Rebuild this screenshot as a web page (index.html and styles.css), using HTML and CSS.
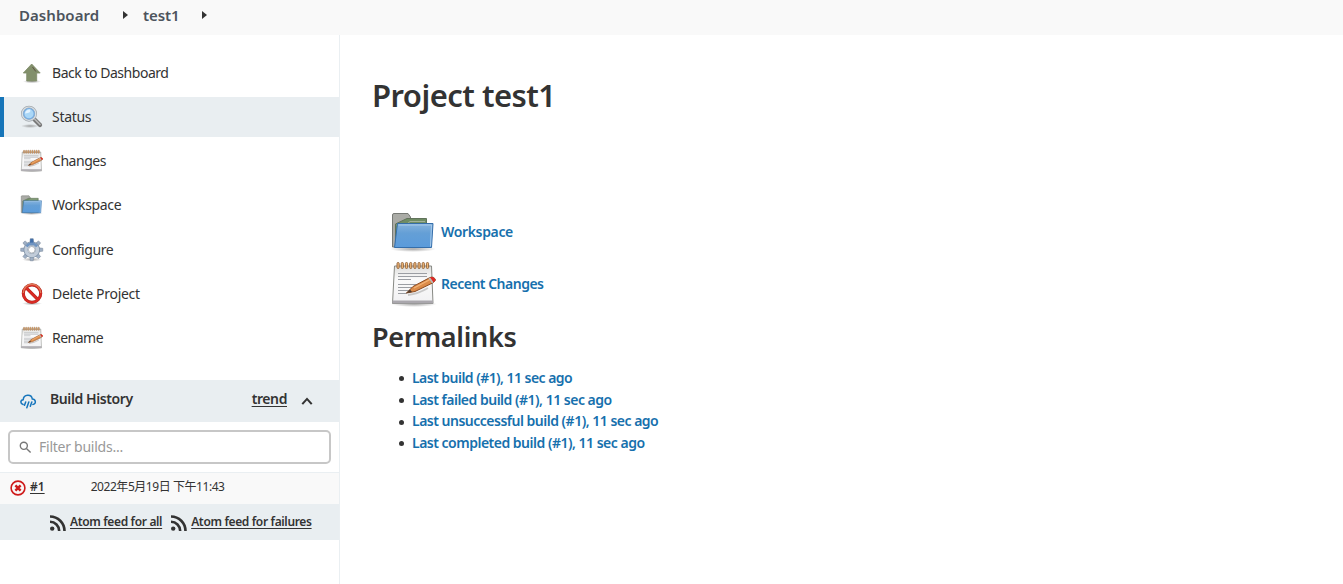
FILE: index.html
```html
<!DOCTYPE html>
<html lang="en">
<head>
<meta charset="utf-8">
<title>test1</title>
<link rel="stylesheet" href="styles.css">
</head>
<body>
<svg class="defs" width="0" height="0" aria-hidden="true">
  <defs>
    <linearGradient id="blue" x1="0" y1="0" x2="0" y2="1"><stop offset="0" stop-color="#86b3dd"/><stop offset=".4" stop-color="#649fd6"/><stop offset="1" stop-color="#5b9bdb"/></linearGradient>
    <linearGradient id="paper" x1="0" y1="0" x2="0" y2="1"><stop offset="0" stop-color="#dededc"/><stop offset=".35" stop-color="#fafafa"/><stop offset="1" stop-color="#f1f1f3"/></linearGradient>
    <radialGradient id="shade"><stop offset="0" stop-color="#777" stop-opacity=".65"/><stop offset="1" stop-color="#777" stop-opacity="0"/></radialGradient>
    <symbol id="notepad" viewBox="0 0 48 48">
      <ellipse cx="24" cy="44" rx="23" ry="3" fill="url(#shade)"/>
      <path d="M4.500 6H41.500L43 43.500H2.500Z" fill="url(#paper)" stroke="#888a85"/>
      <path d="M2.500 40.500H43V43.500H2.500Z" fill="#aaa7ad"/>
      <path d="M8 13.500H37M8 16.500H37M8 19.500H21M8 24.500H26M8 27.500H24M8 30.500H21M8 33.500H17" stroke="#9b9ea3"/>
      <g fill="#f0b878" stroke="#8d5f38" stroke-width=".9"><rect x="7" y="2.500" width="2.200" height="6" rx="1"/><rect x="11.200" y="2.500" width="2.200" height="6" rx="1"/><rect x="15.400" y="2.500" width="2.200" height="6" rx="1"/><rect x="19.600" y="2.500" width="2.200" height="6" rx="1"/><rect x="23.800" y="2.500" width="2.200" height="6" rx="1"/><rect x="28" y="2.500" width="2.200" height="6" rx="1"/><rect x="32.200" y="2.500" width="2.200" height="6" rx="1"/><rect x="36.400" y="2.500" width="2.200" height="6" rx="1"/></g>
      <path d="M18 35Q28 34 38 28" stroke="#aaa" stroke-width="2" fill="none" opacity=".6"/>
      <path d="M16.500 33L23 26.500 40 17.500Q44 16 45.500 20L43.500 22.500 25 31.500Z" fill="#dc8c4a" stroke="#8b4a20"/>
      <path d="M24 28L41 19" stroke="#f3b478" stroke-width="1.400"/>
      <path d="M16.500 33L20 29.500 22 32Z" fill="#4b3b30"/>
      <path d="M40 17.500Q44 16 45.500 20L43.500 22.500Z" fill="#df2727"/><path d="M38.500 18.300L40 17.500 43.500 22.500 42 23.300Z" fill="#bbb"/>
    </symbol>
    <symbol id="folder" viewBox="0 0 48 48">
      <ellipse cx="23" cy="41" rx="23" ry="3" fill="url(#shade)"/>
      <path d="M2.500 39V7Q2.500 5.500 4 5.500H18L20.500 9V39Z" fill="#aaaba6" stroke="#777a75"/>
      <path d="M5.500 39V16L17 10.500H36.500V39Z" fill="#6f8c64" stroke="#60725a"/>
      <path d="M6.500 17H16L20 13.500H35" stroke="#a2b298" fill="none"/>
      <path d="M7.500 15.500H43L41.500 39.500H4.500Z" fill="url(#blue)" stroke="#356eaa"/>
      <path d="M8.500 17H41.500L40.500 38.500" stroke="#a8caea" fill="none"/>
    </symbol>
    <symbol id="feed" viewBox="0 0 16 16">
      <g fill="none" stroke="#333"><path d="M0 1.500A14.500 14.500 0 0 1 14.500 16" stroke-width="2.600"/><path d="M0 6.800A9.200 9.200 0 0 1 9.200 16" stroke-width="2.600"/></g><circle cx="2.200" cy="13.600" r="2.200" fill="#333"/>
    </symbol>
  </defs>
</svg>

<header class="crumbs">
  <a class="crumb-home">Dashboard</a><i class="caret caret-first"></i>
  <a class="crumb-job">test1</a><i class="caret"></i>
</header>

<div class="page">
  <aside class="side">
    <nav class="tasks">
      <a class="task"><svg class="icon" viewBox="0 0 24 24"><ellipse cx="12" cy="20.500" rx="9" ry="1.800" fill="url(#shade)"/><path d="M11.700 3L20.200 12H16.700V20H6.700V12H3.300Z" fill="#82906b" stroke="#7d8a68" stroke-width=".8"/><path d="M12.500 6L15.800 10.500" stroke="#5a4b40" stroke-width=".9"/></svg><span class="t-back">Back to Dashboard</span></a>
      <a class="task active"><svg class="icon" viewBox="0 0 24 24"><ellipse cx="10" cy="21" rx="9" ry="2" fill="url(#shade)"/><path d="M14.500 14.500L20 20" stroke="#777" stroke-width="4.200" stroke-linecap="round"/><path d="M14.800 14.300L20 19.500" stroke="#b9b9b9" stroke-width="1.600" stroke-linecap="round"/><circle cx="9" cy="8.700" r="6.700" fill="#aad7f7" stroke="#a3a9ae" stroke-width="2.600"/><circle cx="9" cy="8.700" r="6.700" fill="none" stroke="#d9dfe4" stroke-width="1.200"/><circle cx="9" cy="8.700" r="5.200" fill="none" stroke="#77ace0" stroke-width="1.200"/><path d="M5 8.500A4.500 4.500 0 0 1 10 4.500Q12 8 5 8.500Z" fill="#e4f3ff"/></svg><span class="t-status">Status</span></a>
      <a class="task"><svg class="icon" viewBox="0 0 48 48"><use href="#notepad"/></svg><span class="t-changes">Changes</span></a>
      <a class="task"><svg class="icon" viewBox="0 0 48 48"><use href="#folder"/></svg><span class="t-workspace">Workspace</span></a>
      <a class="task"><svg class="icon" viewBox="0 0 24 24"><ellipse cx="12" cy="21.500" rx="10" ry="2" fill="url(#shade)"/><g fill="#9eafc5" stroke="#768596" stroke-width=".5"><path id="cog" d="M9.800 5L10.300.7H13.200L13.700 5ZM9.800 18L10.300 22.800H13.200L13.700 18Z"/><use href="#cog" transform="rotate(45 11.750 11.750)"/><use href="#cog" transform="rotate(90 11.750 11.750)"/><use href="#cog" transform="rotate(135 11.750 11.750)"/></g><circle cx="11.750" cy="11.750" r="6" fill="none" stroke="#8093a8" stroke-width="4.500"/><circle cx="11.750" cy="11.750" r="5.800" fill="none" stroke="#c1ccd9" stroke-width="3.300"/><path d="M9.800 7L10.300 .7H13.200L13.700 7Z" fill="#426fa9"/><path d="M6.500 8.500A6.500 6.500 0 0 1 17 8.500" fill="none" stroke="#6f94c1" stroke-width="2.500"/><circle cx="11.750" cy="11.750" r="3.300" fill="#fff" stroke="#8e979f" stroke-width=".7"/></svg><span class="t-configure">Configure</span></a>
      <a class="task"><svg class="icon" viewBox="0 0 24 24"><ellipse cx="12" cy="21.500" rx="10" ry="1.800" fill="url(#shade)"/><circle cx="12" cy="11.600" r="8.500" fill="#fff"/><g fill="none"><circle cx="12" cy="11.600" r="8.700" stroke="#aa271e" stroke-width="3.100"/><path d="M6 5.600L18 17.600" stroke="#aa271e" stroke-width="3.200"/><circle cx="12" cy="11.600" r="8.700" stroke="#d92a24" stroke-width="2.300"/><path d="M6 5.600L18 17.600" stroke="#d92a24" stroke-width="2.400"/><path d="M3.300 11A8.700 8.700 0 0 1 20.700 11" stroke="#df7a58" stroke-width="1.400"/></g></svg><span class="t-delete">Delete Project</span></a>
      <a class="task"><svg class="icon" viewBox="0 0 48 48"><use href="#notepad"/></svg><span class="t-rename">Rename</span></a>
    </nav>

    <section class="history">
      <div class="history-head">
        <svg class="cloud" viewBox="0 0 16 16" fill="none" stroke="#1675bc" stroke-width="1.500" stroke-linecap="round"><path d="M3.100 10.500C.2 9.800 0 6.200 3.200 5.700C3.600.2 11.500-.2 12.300 5C16.200 5.200 16.300 10.300 12.900 10.500"/><path d="M5.700 8L4.500 11.300M8.800 8L6.800 13.800M11.800 8L10.300 12.300"/></svg>
        <b class="history-title">Build History</b><a class="trend">trend</a>
        <svg class="chevron" viewBox="0 0 14 10" fill="none" stroke="#333" stroke-width="2.400"><path d="M1.500 8L7 2L12.500 8"/></svg>
      </div>
      <div class="filter-wrap"><div class="filter">
        <svg class="search" viewBox="0 0 14 14" fill="none" stroke="#777" stroke-width="1.500"><circle cx="5.200" cy="5.200" r="3.800"/><path d="M8 8L12.500 12.500"/></svg>
        <span class="placeholder">Filter builds...</span>
      </div></div>
      <div class="build">
        <svg class="failed" viewBox="0 0 16 16" fill="none" stroke="#ce1b1b"><circle cx="8" cy="8" r="6.900" stroke-width="1.600"/><path d="M5.400 5.400L10.600 10.600M10.600 5.400L5.400 10.600" stroke-width="2.500"/></svg>
        <a class="number">#1</a><span class="date">2022年5月19日 下午11:43</span>
      </div>
      <div class="feeds">
        <svg class="rss" viewBox="0 0 16 16"><use href="#feed"/></svg><a class="feed-all">Atom feed for all</a>
        <svg class="rss rss-next" viewBox="0 0 16 16"><use href="#feed"/></svg><a class="feed-fail">Atom feed for failures</a>
      </div>
    </section>
  </aside>

  <main class="main">
    <h1>Project test1</h1>
    <div class="shortcuts">
      <a class="shortcut"><svg class="big" viewBox="0 0 48 48"><use href="#folder"/></svg><span class="s-workspace">Workspace</span></a>
      <a class="shortcut"><svg class="big" viewBox="0 0 48 48"><use href="#notepad"/></svg><span class="s-changes">Recent Changes</span></a>
    </div>
    <h2>Permalinks</h2>
    <ul class="links">
      <li><a class="first">Last build (#1), 11 sec ago</a></li>
      <li><a>Last failed build (#1), 11 sec ago</a></li>
      <li><a>Last unsuccessful build (#1), 11 sec ago</a></li>
      <li><a>Last completed build (#1), 11 sec ago</a></li>
    </ul>
  </main>
</div>
</body>
</html>
```
FILE: styles.css
```css
* { box-sizing: border-box; }
body { margin: 0; height: 584px; overflow: hidden; background: #fff; color: #333; font: 14px/20px "Noto Sans", "Noto Sans CJK SC", sans-serif; display: flex; flex-direction: column; }
.defs { display: block; position: absolute; }
svg { flex: none; overflow: visible; }
a, b, span { white-space: nowrap; }

.crumbs { height: 35px; background: #f9f9f9; display: flex; align-items: center; padding: 0 0 5px 19px; font-size: 15px; font-weight: 600; color: #4d545d; flex: none; }
.crumb-home { width: 104px; letter-spacing: .05px; }
.crumb-job { width: 38px; margin-left: 15px; letter-spacing: -.1px; }
.caret { width: 0; height: 0; border: 4px solid transparent; border-left: 5px solid #333; border-right: 0; margin-left: 21px; }
.caret-first { margin-left: 0; }

.page { flex: 1; display: flex; min-height: 0; }
.side { width: 340px; flex: none; border-right: 1px solid #eaeff2; }
.tasks { height: 345px; padding-top: 18px; display: flex; flex-direction: column; gap: 4.170px; }
.task { height: 40px; flex: none; display: flex; align-items: center; gap: 8px; padding-left: 20px; }
.active { background: #e9eef1; border-left: 4px solid #1675b9; padding-left: 16px; }
.icon { width: 24px; height: 24px; }
.t-back { letter-spacing: -.47px; }
.t-status { letter-spacing: -.3px; }
.t-changes { letter-spacing: -.45px; }
.t-workspace { letter-spacing: -.33px; }
.t-configure { letter-spacing: -.42px; }
.t-delete { letter-spacing: -.3px; }
.t-rename { letter-spacing: -.5px; }

.history-head { height: 42px; background: #e9eef1; display: flex; align-items: center; padding: 0 26px 4px 20px; }
.cloud { width: 16px; height: 16px; margin: 5px 14px 0 0; }
.history-title { font-weight: 600; letter-spacing: -.4px; }
.trend { margin-left: auto; font-weight: 600; letter-spacing: -.4px; text-decoration: underline; text-underline-offset: 2px; }
.chevron { width: 12px; height: 9px; margin: 5px 0 0 14px; }
.filter-wrap { padding: 8px; height: 50px; }
.filter { width: 323px; height: 34px; border: 2px solid #c7c7c7; border-radius: 5px; display: flex; align-items: center; padding-left: 9px; }
.search { width: 13px; height: 13px; }
.placeholder { margin-left: 7px; color: #999; letter-spacing: -.25px; }
.build { height: 32px; border-top: 1px solid #eaeff2; background: #f9f9f9; display: flex; align-items: center; padding: 0 0 3px 10px; font-size: 12px; }
.failed { width: 16px; height: 16px; margin: 2px 4px 0 0; }
.number { margin-right: 46px; font-weight: 600; text-decoration: underline; text-underline-offset: 2px; }
.date { letter-spacing: -.44px; }
.feeds { height: 36px; background: #e9eef1; display: flex; align-items: center; padding-left: 50px; font-size: 12px; font-weight: 600; text-underline-offset: 2px; }
.feeds a { text-decoration: underline; margin-bottom: 1px; letter-spacing: -.35px; }
.rss { width: 16px; height: 16px; margin: 2px 4px 0 0; }
.rss-next { margin-left: 9px; }

.main { flex: 1; padding: 40px 0 0 32px; }
h1 { margin: 0; font-size: 31px; line-height: 40px; font-weight: 600; letter-spacing: -.53px; }
.shortcuts { margin: 93px 0 0 18px; display: flex; flex-direction: column; gap: 4px; }
.shortcut { display: flex; align-items: center; gap: 3px; color: #1670ad; font-weight: 600; height: 48px; }
.s-workspace { letter-spacing: -.35px; }
.s-changes { letter-spacing: -.5px; }
.big { width: 48px; height: 48px; }
h2 { margin: 10px 0 0; font-size: 27px; line-height: 38px; font-weight: 600; letter-spacing: -.3px; }
.links { margin: 11px 0 0; padding-left: 27px; list-style: none; }
.links li { height: 21.670px; line-height: 21.670px; display: flex; align-items: center; }
.links li::before { content: ""; width: 5px; height: 5px; border-radius: 50%; background: #333; margin: 2px 8px 0 0; }
.links a { color: #1670ad; font-weight: 600; letter-spacing: -.5px; }
.links .first { letter-spacing: -.54px; }
```
